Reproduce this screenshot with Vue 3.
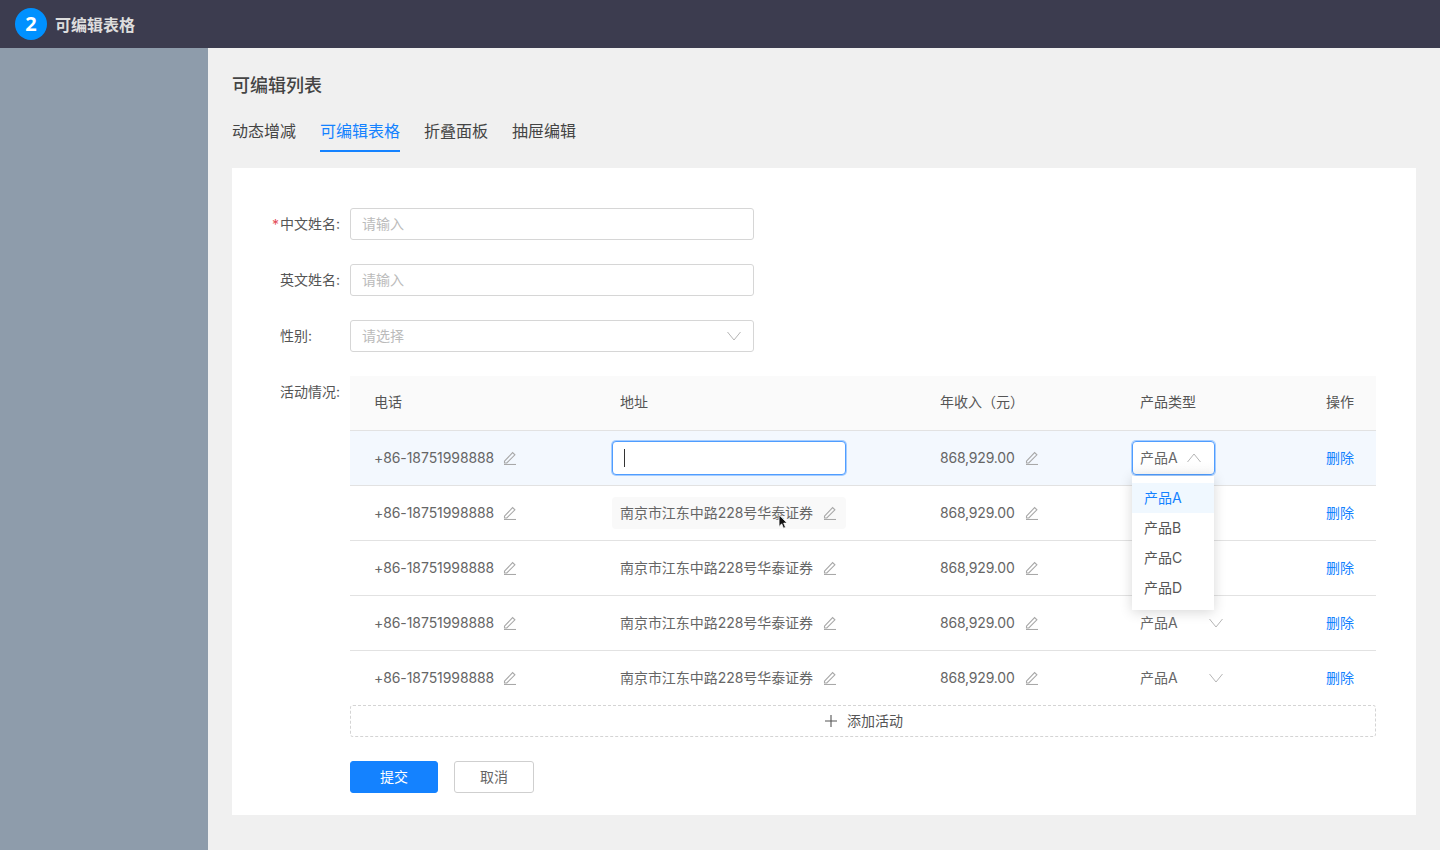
<template>
  <div class="page">
    <header class="topbar">
      <span class="step">2</span>
      <span class="topbar-title">可编辑表格</span>
    </header>
    <div class="body">
      <aside class="side"></aside>
      <main class="main">
        <h1 class="title">可编辑列表</h1>
        <nav class="tabs">
          <a v-for="t in tabs" :key="t" class="tab" :class="{ active: t === '可编辑表格' }">{{ t }}</a>
        </nav>
        <section class="card">
          <div class="field">
            <label class="label"><i class="star">*</i>中文姓名<span class="colon">:</span></label>
            <input class="input" placeholder="请输入" />
          </div>
          <div class="field">
            <label class="label">英文姓名<span class="colon">:</span></label>
            <input class="input" placeholder="请输入" />
          </div>
          <div class="field">
            <label class="label">性别<span class="colon">:</span></label>
            <div class="input select">
              <span>请选择</span>
              <svg class="chevron" viewBox="0 0 14 10"><path d="M.5 1 7 9l6.5-8" /></svg>
            </div>
          </div>
          <div class="field table-field">
            <label class="label">活动情况<span class="colon">:</span></label>
            <div class="table-wrap">
              <div class="row head">
                <div>电话</div>
                <div>地址</div>
                <div>年收入（元）</div>
                <div>产品类型</div>
                <div class="op">操作</div>
              </div>
              <div v-for="(r, i) in rows" :key="i" class="row" :class="{ current: i === 0 }">
                <div class="cell num">
                  {{ r.phone }}
                  <svg class="pen" viewBox="0 0 14 14"><path d="M1.5 10.2 9.6 1.6l2.3 2.2-8.1 8.2H1.5z" /><path d="M1 13.5h12" /></svg>
                </div>
                <div class="cell addr-cell">
                  <div v-if="i === 0" class="addr-edit"><span class="caret"></span></div>
                  <div v-else class="addr" :class="{ hover: i === 1 }">
                    {{ r.addr }}
                    <svg class="pen" viewBox="0 0 14 14"><path d="M1.5 10.2 9.6 1.6l2.3 2.2-8.1 8.2H1.5z" /><path d="M1 13.5h12" /></svg>
                  </div>
                </div>
                <div class="cell num income">
                  {{ r.income }}
                  <svg class="pen" viewBox="0 0 14 14"><path d="M1.5 10.2 9.6 1.6l2.3 2.2-8.1 8.2H1.5z" /><path d="M1 13.5h12" /></svg>
                </div>
                <div class="cell product-cell">
                  <!-- 第2、3行被下拉菜单盖住 -->
                  <div v-if="i !== 1 && i !== 2" class="product" :class="{ open: i === 0 }">
                    <span class="product-name">{{ r.product }}</span>
                    <svg class="chevron" viewBox="0 0 14 10"><path :d="i === 0 ? 'M.5 9 7 1l6.5 8' : 'M.5 1 7 9l6.5-8'" /></svg>
                  </div>
                  <ul v-if="i === 0" class="menu">
                    <li v-for="o in options" :key="o" :class="{ selected: o === '产品A' }">{{ o }}</li>
                  </ul>
                </div>
                <div class="cell op"><a class="del">删除</a></div>
              </div>
              <svg class="cursor" viewBox="0 0 12 18"><path d="M1 1v13l3-3 2 5 2.2-1-2-4.8H10z" /></svg>
            </div>
          </div>
          <div class="add">
            <svg class="plus" viewBox="0 0 12 12"><path d="M6 0v12M0 6h12" /></svg>
            添加活动
          </div>
          <div class="actions">
            <button class="btn primary">提交</button>
            <button class="btn">取消</button>
          </div>
        </section>
      </main>
    </div>
  </div>
</template>

<script setup>
const tabs = ['动态增减', '可编辑表格', '折叠面板', '抽屉编辑']
const options = ['产品A', '产品B', '产品C', '产品D']
const rows = Array.from({ length: 5 }, () => ({
  phone: '+86-18751998888',
  addr: '南京市江东中路228号华泰证券',
  income: '868,929.00',
  product: '产品A'
}))
</script>

<style>
html,
body {
  margin: 0;
  background: #f0f0f0;
}
</style>

<style scoped>
.page {
  height: 850px;
  overflow: hidden;
  font-family: Inter, "Noto Sans CJK SC", sans-serif;
  font-size: 14px;
  color: #666;
}

.topbar {
  height: 48px;
  background: #3c3c4f;
  display: flex;
  align-items: center;
  padding-left: 15px;
  gap: 8px;
}

.step {
  width: 32px;
  height: 32px;
  border-radius: 50%;
  background: #0091ff;
  color: #fff;
  font-family: "Noto Sans", sans-serif;
  font-size: 20px;
  font-weight: 700;
  line-height: 32px;
  text-align: center;
}

.topbar-title {
  color: #ddd;
  font-size: 16px;
  font-weight: 700;
}

.body {
  display: flex;
  height: 802px;
}

.side {
  width: 208px;
  background: #8e9cab;
}

.main {
  flex: 1;
  padding: 25px 24px 0;
  background: #f0f0f0;
}

.title {
  margin: 0;
  font-size: 18px;
  font-weight: 500;
  line-height: 26px;
  color: #444;
}

.tabs {
  display: flex;
  gap: 24px;
  margin-top: 12px;
  height: 41px;
}

.tab {
  font-size: 16px;
  line-height: 24px;
  padding-top: 8px;
  height: 31px;
  color: #444;
}

.tab.active {
  color: #1482ff;
  border-bottom: 2px solid #1482ff;
}

.card {
  margin-top: 16px;
  background: #fff;
  height: 647px;
  padding: 40px 40px 0 0;
  box-sizing: border-box;
}

.field {
  display: flex;
  margin-bottom: 24px;
}

.table-field {
  margin-bottom: 0;
}

.label {
  width: 118px;
  box-sizing: border-box;
  padding-left: 48px;
  line-height: 32px;
  color: #555;
  position: relative;
  flex-shrink: 0;
}

.star {
  position: absolute;
  left: 40px;
  top: 1px;
  color: #e34d59;
  font-style: normal;
}

.colon {
  display: inline-block;
  width: 6px;
}

.input {
  width: 404px;
  height: 32px;
  box-sizing: border-box;
  border: 1px solid #d6d6d6;
  border-radius: 3px;
  padding: 0 11px 2px;
  font: inherit;
  color: #bbb;
  background: #fff;
  outline: none;
}

.input::placeholder {
  color: #bbb;
}

.select {
  display: flex;
  align-items: center;
  justify-content: space-between;
  padding-right: 12px;
}

.chevron {
  width: 14px;
  height: 10px;
  margin-top: 2px;
  fill: none;
  stroke: #b5b5b5;
  stroke-width: 1;
  flex-shrink: 0;
}

.table-wrap {
  flex: 1;
  position: relative;
}

.row {
  display: grid;
  grid-template-columns: 246px 320px 200px 180px 80px;
  height: 55px;
  box-sizing: border-box;
  border-bottom: 1px solid #e2e2e2;
  align-items: center;
}

.row:last-of-type {
  border-bottom: none;
  height: 54px;
}

.row > div {
  padding-left: 24px;
  padding-bottom: 2px;
  display: flex;
  align-items: center;
  white-space: nowrap;
}

.head {
  background: #fafafa;
  color: #555;
}

.head > div {
  margin-bottom: 2px;
}

.current {
  background: #f3f8fe;
}

.row > .op {
  justify-content: flex-end;
  padding: 0 22px 2px 0;
}

.num {
  letter-spacing: -0.08px;
}

.income {
  letter-spacing: -0.2px;
}

.pen {
  width: 14px;
  height: 14px;
  margin: 2px 0 0 9px;
  fill: none;
  stroke: #a8a8a8;
  stroke-width: 1.1;
  flex-shrink: 0;
}

.income .pen,
.addr .pen {
  margin-left: 10px;
}

.row > .addr-cell,
.row > .product-cell {
  padding: 0 0 0 16px;
}

.addr,
.addr-edit {
  width: 234px;
  height: 32px;
  box-sizing: border-box;
  border-radius: 4px;
  display: flex;
  align-items: center;
  padding: 0 0 2px 8px;
}

.addr {
  letter-spacing: -0.05px;
}

.addr.hover {
  background: #f9f9f9;
}

.addr-edit {
  height: 34px;
  background: #fff;
  border: 1px solid #4f9dff;
  box-shadow: 0 0 0 1px #a6cdff;
  padding: 0 0 0 11px;
}

.caret {
  width: 1px;
  height: 18px;
  background: #333;
}

.product-cell {
  position: relative;
}

.product {
  width: 100px;
  height: 32px;
  box-sizing: border-box;
  display: flex;
  align-items: center;
  padding: 0 0 2px 8px;
  gap: 31px;
}

.product-name {
  width: 38px;
  flex-shrink: 0;
}

.product.open {
  width: 83px;
  height: 34px;
  gap: 9px;
  background: linear-gradient(#fff 60%, #fafafa);
  border: 1px solid #4f9dff;
  border-radius: 4px;
  box-shadow: 0 0 0 1px #a6cdff;
  padding-left: 7px;
}

.menu {
  position: absolute;
  left: 16px;
  top: 35px;
  width: 82px;
  margin: 0;
  padding: 7px 0;
  list-style: none;
  background: #fff;
  box-shadow: 0 2px 12px rgba(0, 0, 0, 0.16);
  z-index: 2;
}

.menu li {
  height: 30px;
  line-height: 30px;
  padding-left: 12px;
  color: #555;
}

.menu li.selected {
  background: #f0f8ff;
  color: #1482ff;
}

.del {
  color: #1482ff;
}

.cursor {
  position: absolute;
  left: 428px;
  top: 138px;
  width: 11px;
  height: 16px;
  fill: #111;
  stroke: #fff;
  stroke-width: 0.8;
  z-index: 3;
}

.add {
  margin-left: 118px;
  height: 32px;
  box-sizing: border-box;
  border: 1px dashed #d4d4d4;
  border-radius: 3px;
  display: flex;
  align-items: center;
  justify-content: center;
  gap: 10px;
  color: #555;
  padding-bottom: 2px;
}

.plus {
  width: 12px;
  height: 12px;
  margin: 2px 0 0 2px;
  fill: none;
  stroke: #555;
  stroke-width: 1.1;
}

.actions {
  margin: 24px 0 0 118px;
  display: flex;
  gap: 16px;
}

.btn {
  width: 80px;
  height: 32px;
  border: 1px solid #cfcfcf;
  border-radius: 3px;
  background: #fff;
  color: #666;
  font: inherit;
  padding: 0 0 2px;
}

.btn.primary {
  width: 88px;
  background: #1482ff;
  border-color: #1482ff;
  color: #fff;
}
</style>
